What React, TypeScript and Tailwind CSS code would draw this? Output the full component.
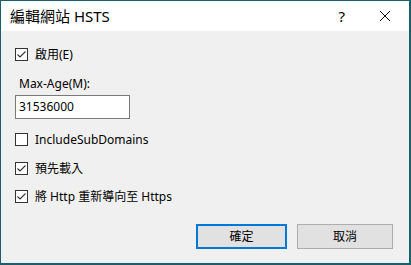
import React from "react"

const font = { fontFamily: '"Segoe UI", "Noto Sans", "Noto Sans CJK TC", sans-serif' }

function Check({ checked, label }: { checked: boolean; label: string }) {
  return (
    <div className="flex h-[15px] items-center">
      <div className="flex h-[13px] w-[13px] items-center justify-center border border-[#333333] bg-white">
        {checked && (
          <svg width="11" height="11" viewBox="0 0 11 11">
            <polyline points="1.5,5.5 4,8 9.5,2.5" fill="none" stroke="#333333" strokeWidth="1.1" />
          </svg>
        )}
      </div>
      <span className="ml-[7px] text-[12px] leading-[15px] text-black">{label}</span>
    </div>
  )
}

export default function App() {
  return (
    <div
      style={font}
      className="flex h-[265px] w-[411px] flex-col border-t border-l border-r-2 border-b-2 border-[#1b5e6c] bg-[#f0f0f0]"
    >
      {/* title bar */}
      <div className="flex h-[30px] items-center bg-white pl-[9px]">
        <span className="text-[15px] text-black">編輯網站 HSTS</span>
        <span className="ml-auto mr-[34px] text-[15px] text-black">?</span>
        <svg width="12" height="12" viewBox="0 0 12 12" className="mr-[18px]">
          <path d="M1 1L11 11M11 1L1 11" stroke="#111" strokeWidth="1" />
        </svg>
      </div>

      {/* body */}
      <div className="flex flex-1 flex-col pl-[14px] pr-[16px]">
        <div className="mt-[16px]">
          <Check checked label="啟用(E)" />
        </div>
        <div className="mt-[14px] pl-[4px] text-[12px] leading-[15px] text-black">Max-Age(M):</div>
        <div className="mt-[4px] flex h-[24px] w-[115px] items-center border border-[#7a7a7a] bg-white pl-[3px] text-[12px] text-black">
          31536000
        </div>
        <div className="mt-[13px]">
          <Check checked={false} label="IncludeSubDomains" />
        </div>
        <div className="mt-[14px]">
          <Check checked label="預先載入" />
        </div>
        <div className="mt-[13px]">
          <Check checked label="將 Http 重新導向至 Https" />
        </div>
        <div className="mt-[20px] flex justify-end gap-[10px]">
          <button className="h-[25px] w-[91px] border-2 border-[#0078d7] bg-[#e1e1e1] text-[12px] text-black">
            確定
          </button>
          <button className="h-[25px] w-[96px] border border-[#adadad] bg-[#e1e1e1] text-[12px] text-black">
            取消
          </button>
        </div>
      </div>
    </div>
  )
}
